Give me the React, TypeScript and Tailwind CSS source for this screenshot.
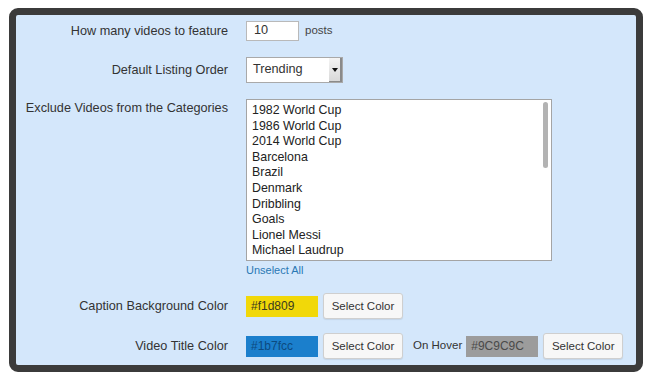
import { ReactNode } from 'react';

// Settings panel: "featured videos" widget options inside a dark rounded frame.

const CATEGORIES = [
  '1982 World Cup',
  '1986 World Cup',
  '2014 World Cup',
  'Barcelona',
  'Brazil',
  'Denmark',
  'Dribbling',
  'Goals',
  'Lionel Messi',
  'Michael Laudrup',
];

function Row({ label, children, className = '' }: { label: string; children: ReactNode; className?: string }) {
  return (
    <div className={`flex items-center ${className}`}>
      <div className="w-[212px] shrink-0 text-right text-[12.7px] leading-4 text-[#333]">{label}</div>
      <div className="ml-[18px] flex items-center">{children}</div>
    </div>
  );
}

function SelectButton() {
  return (
    <button className="h-[26px] w-[80px] rounded-[3px] border border-[#cfcfcf] bg-[#f7f7f7] text-[11.5px] text-[#333] shadow-[0_1px_1px_rgba(0,0,0,0.08)]">
      Select Color
    </button>
  );
}

function Swatch({ value, bg, fg }: { value: string; bg: string; fg: string }) {
  return (
    <div className={`flex h-[21px] w-[72px] items-center px-[5px] text-[12px] ${bg} ${fg}`}>{value}</div>
  );
}

export default function App() {
  return (
    <div className="h-[376px] w-[650px] bg-white pl-[9px] pt-[8px] font-['Liberation_Sans',Arial,sans-serif]">
      <div className="h-[364px] w-[634px] rounded-[9px] border-[7px] border-[#3b3b3b] bg-[#d4e7fb]">
        <div className="flex flex-col pt-[6px]">
          <Row label="How many videos to feature" className="h-[20px]">
            <div className="flex h-[20px] w-[53px] items-center border border-[#b9b9b9] bg-white px-[7px] text-[12.7px] text-[#333]">
              10
            </div>
            <span className="ml-[6px] text-[11.5px] text-[#444]">posts</span>
          </Row>

          <Row label="Default Listing Order" className="mt-[16px] h-[26px]">
            <div className="flex h-[26px] w-[97px] items-stretch border border-[#a9a9a9] bg-white">
              <div className="flex flex-1 items-center pl-[6px] text-[12.7px] text-[#333]">Trending</div>
              <div className="flex w-[13px] items-center justify-center border-r-2 border-b border-[#8a8a8a] bg-gradient-to-b from-[#f4f4f4] to-[#d9d9d9]">
                <svg width="6" height="4" viewBox="0 0 6 4">
                  <path d="M0 0h6L3 4z" fill="#111" />
                </svg>
              </div>
            </div>
          </Row>

          <div className="mt-[16px] flex items-start">
            <div className="w-[212px] shrink-0 pt-[1px] text-right text-[12.7px] leading-4 text-[#333]">
              Exclude Videos from the Categories
            </div>
            <div className="ml-[18px] flex flex-col">
              <div className="relative h-[162px] w-[306px] overflow-hidden border border-[#a4a4a4] bg-white pl-[5px] pt-[3px]">
                {CATEGORIES.map((c) => (
                  <div key={c} className="h-[15.6px] text-[12.4px] leading-[15.6px] text-[#222]">
                    {c}
                  </div>
                ))}
                <div className="absolute right-[3px] top-[2px] h-[66px] w-[5px] rounded-full bg-[#b3b3b3]" />
              </div>
              <a className="mt-[1px] h-[16px] text-[11px] leading-4 text-[#2a78b4]">Unselect All</a>
            </div>
          </div>

          <Row label="Caption Background Color" className="mt-[15px] h-[26px]">
            <Swatch value="#f1d809" bg="bg-[#f1d809]" fg="text-[#3a3a20]" />
            <div className="ml-[5px]">
              <SelectButton />
            </div>
          </Row>

          <Row label="Video Title Color" className="mt-[14px] h-[26px]">
            <Swatch value="#1b7fcc" bg="bg-[#1b7fcc]" fg="text-[#0c4a80]" />
            <div className="ml-[5px]">
              <SelectButton />
            </div>
            <span className="ml-[10px] text-[11.5px] text-[#333]">On Hover</span>
            <div className="ml-[4px]">
              <Swatch value="#9C9C9C" bg="bg-[#9c9c9c]" fg="text-[#4a4a4a]" />
            </div>
            <div className="ml-[5px]">
              <SelectButton />
            </div>
          </Row>
        </div>
      </div>
    </div>
  );
}
